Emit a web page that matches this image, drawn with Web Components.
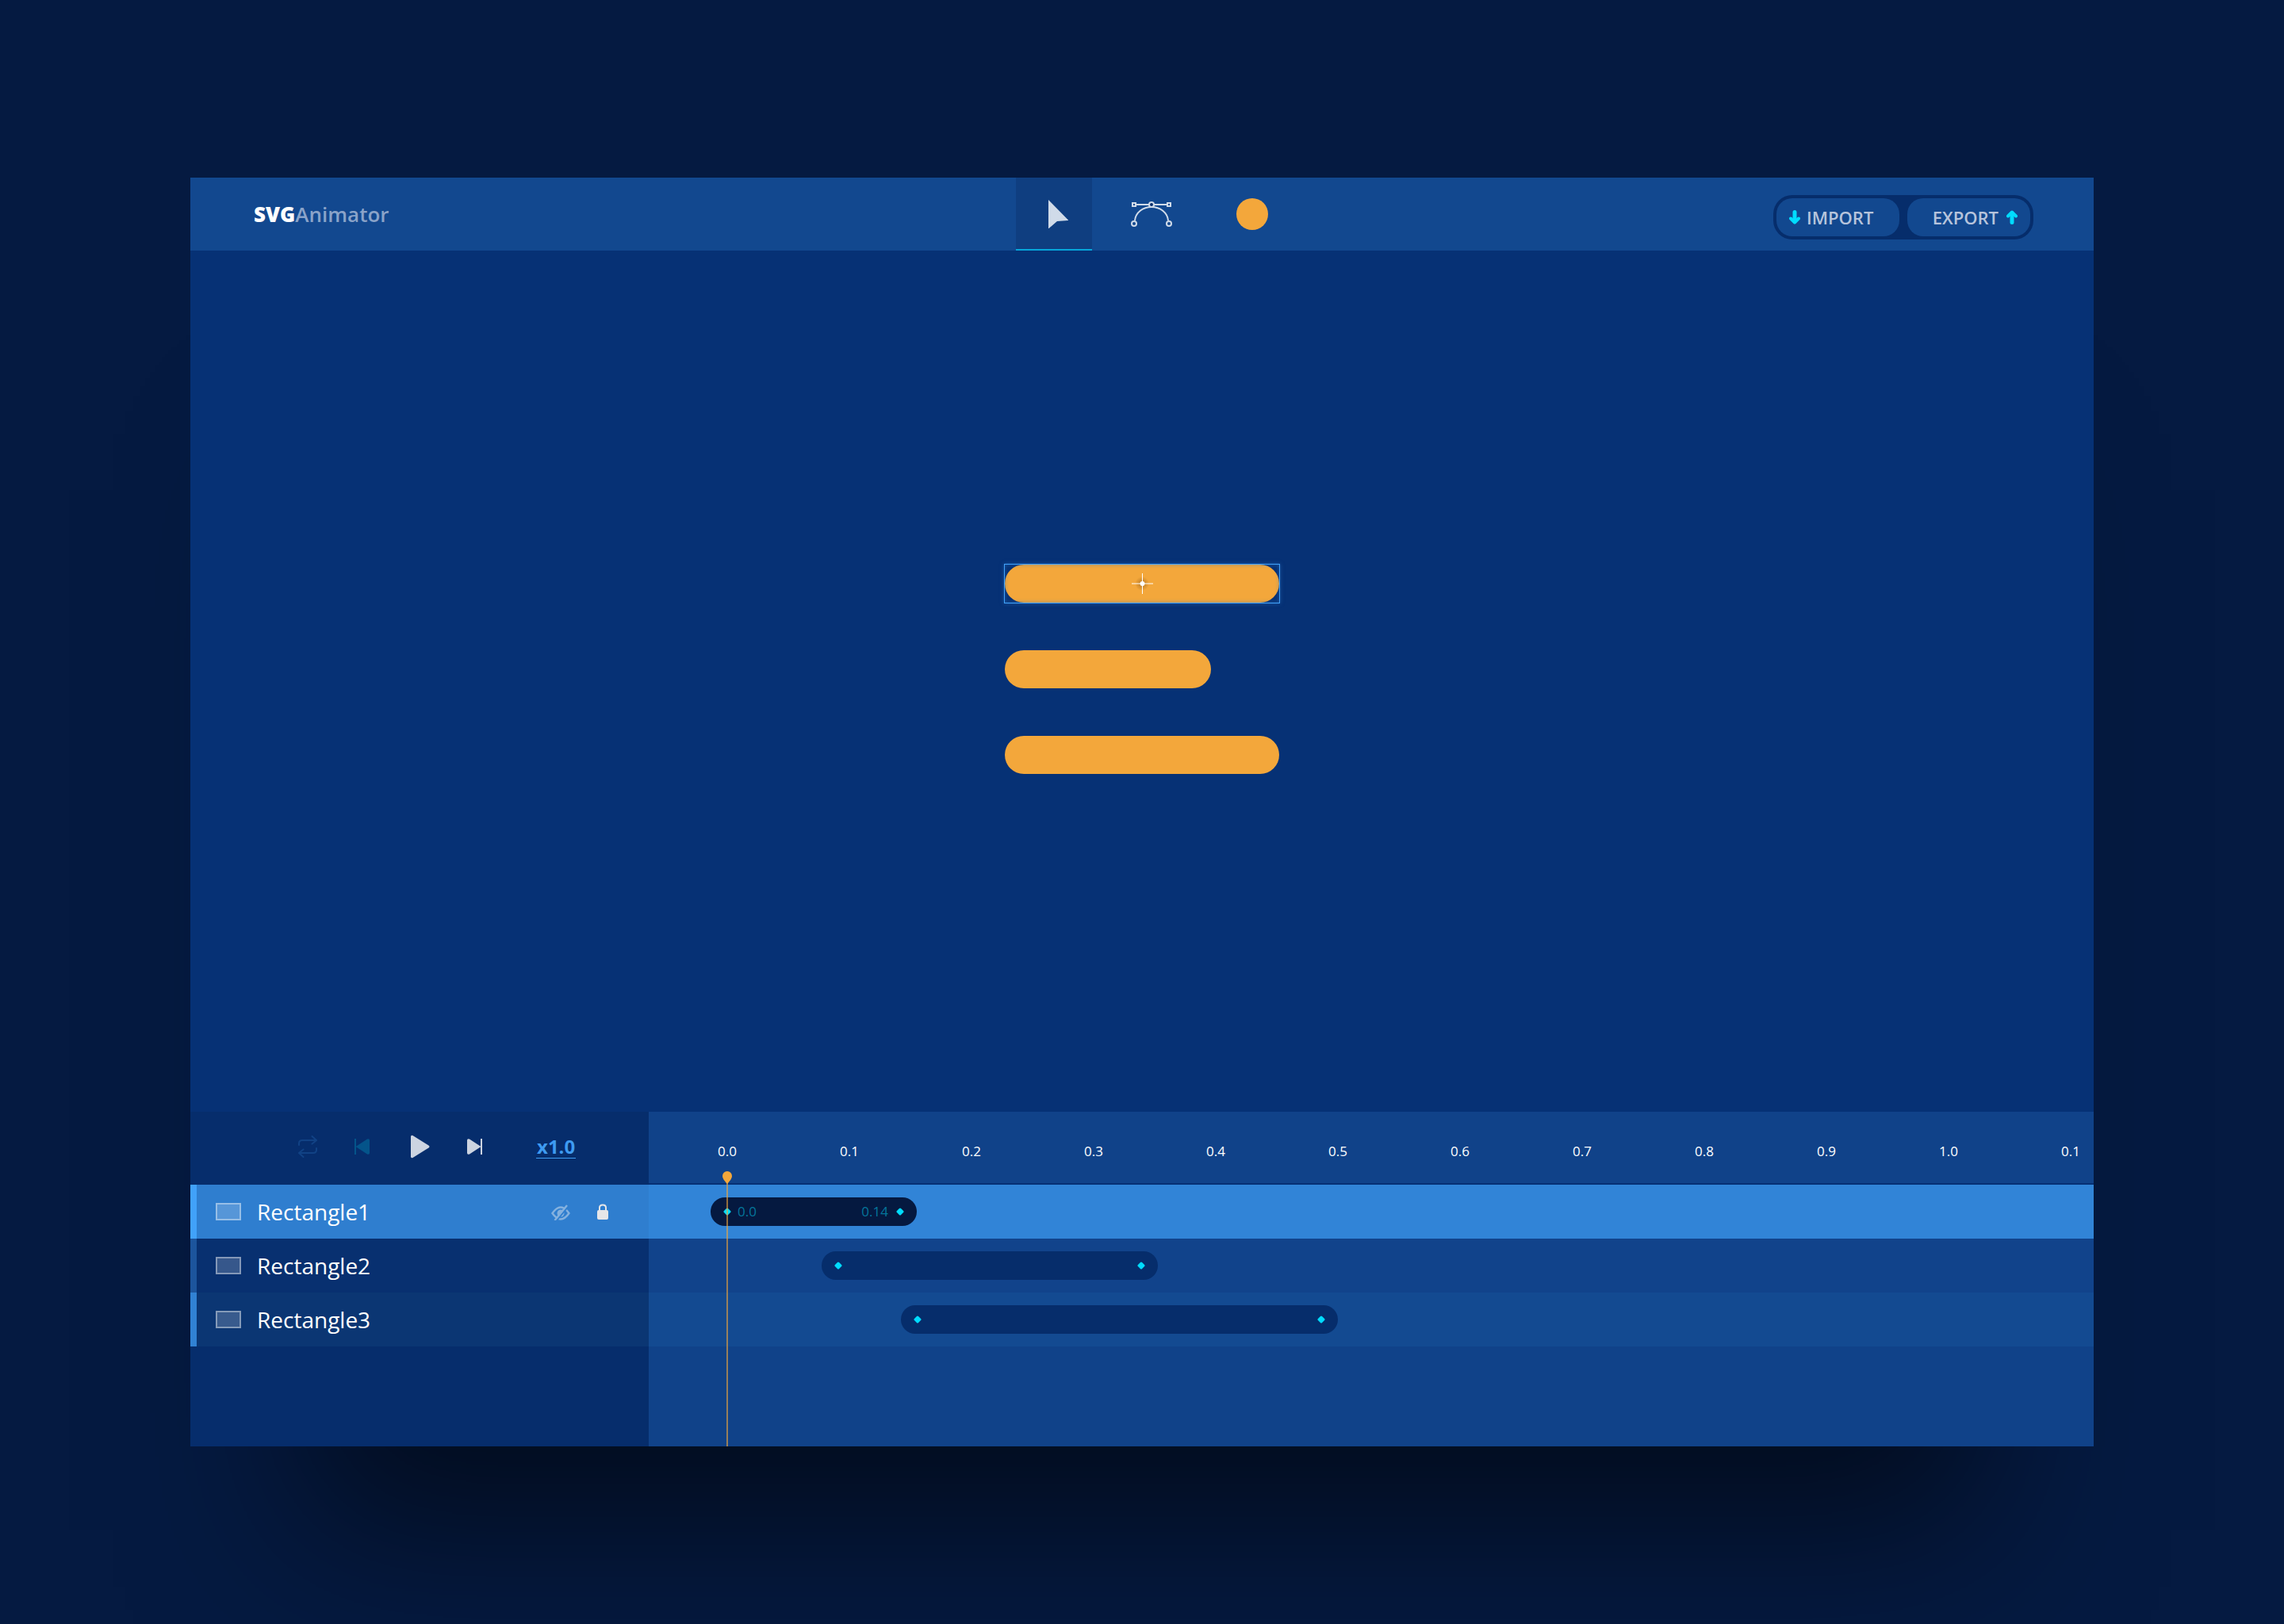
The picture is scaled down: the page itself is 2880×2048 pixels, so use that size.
<!DOCTYPE html>
<html lang="en">
<head>
<meta charset="utf-8">
<title>SVGAnimator</title>
<style>
  html, body { margin: 0; }
  body {
    background: #051a41;
    font-family: "Open Sans", "Noto Sans", sans-serif;
    color: #fff;
  }
</style>
</head>
<body>
<animator-app></animator-app>

<script>
const base = `
  *, *::before, *::after { box-sizing: border-box; }
  button { margin: 0; padding: 0; border: 0; background: none; color: inherit; font: inherit; cursor: pointer; }
  svg { display: block; }
`;

function define(name, render) {
  customElements.define(name, class extends HTMLElement {
    connectedCallback() {
      if (this.shadowRoot) return;
      const root = this.attachShadow({ mode: "open" });
      const template = document.createElement("template");
      template.innerHTML = render(this);
      root.append(template.content.cloneNode(true));
    }
  });
}

/* Icons */
const icons = {
  cursor: `<svg width="36" height="38" viewBox="0 0 36 38"><path d="M11 2L36.500 28L22 29L11 38.500Z" fill="#d0dbe9"/></svg>`,
  pen: `<svg width="52" height="32" viewBox="0 0 52 32" fill="none" stroke="#d0dbe9" stroke-width="2">
      <path d="M7 4H23M29 4H45"/><path d="M5 24C6 14 15 7 26 7S46 14 47 24"/>
      <rect x="2" y="2" width="4" height="4"/><rect x="46" y="2" width="4" height="4"/>
      <circle cx="26" cy="4" r="3" fill="#062d6b"/>
      <circle cx="4" cy="28" r="3" fill="#12488f"/><circle cx="48" cy="28" r="3" fill="#12488f"/></svg>`,
  disc: `<svg width="40" height="40" viewBox="0 0 40 40"><circle cx="20" cy="20" r="20" fill="#f3a73b"/></svg>`,
  down: `<svg width="14" height="18" viewBox="0 0 14 18" fill="none" stroke="#00dcff" stroke-linecap="round" stroke-linejoin="round"><path d="M7 2.500V14" stroke-width="5"/><path d="M2 10.500L7 15.500L12 10.500" stroke-width="4"/></svg>`,
  up: `<svg width="14" height="18" viewBox="0 0 14 18" fill="none" stroke="#00dcff" stroke-linecap="round" stroke-linejoin="round"><path d="M7 15.500V4" stroke-width="5"/><path d="M2 7.500L7 2.500L12 7.500" stroke-width="4"/></svg>`,
  loop: `<svg width="24" height="28" viewBox="0 0 24 28" fill="none" stroke="#114285" stroke-width="2" stroke-linecap="round" stroke-linejoin="round">
      <path d="M1 12V10Q1 6 5 6H22M17.500 1L23 6L17.500 10.500"/><path d="M23 16V18Q23 22 19 22H2M6.500 17.500L1 22L6.500 27"/></svg>`,
  prev: `<svg width="24" height="20" viewBox="0 0 24 20" fill="#04548a"><rect x="0" y="0" width="2" height="20"/><path d="M1.500 10L16 .500Q19 -.500 19 2V18Q19 20.500 16 19.500Z"/></svg>`,
  play: `<svg width="24" height="30" viewBox="0 0 24 30" fill="#ccd4e1"><path d="M0 2.500Q0 0 2.500 1L22.500 13.500Q24.500 15 22.500 16.500L2.500 29Q0 30 0 27.500Z"/></svg>`,
  next: `<svg width="24" height="20" viewBox="0 0 24 20" fill="#ccd4e1"><rect x="17" y="0" width="2" height="20"/><path d="M17.500 10L3 .500Q0 -.500 0 2V18Q0 20.500 3 19.500Z"/></svg>`,
  hidden: `<svg width="24" height="22" viewBox="0 0 24 22" fill="none" stroke="#84b1df" stroke-width="2.400"><path d="M1.500 13Q12 -2 22.500 13Q12 28 1.500 13Z"/><circle cx="12" cy="13" r="4.500" fill="#84b1df" stroke="none"/><path d="M7.500 21.500L21.500 4.500" stroke="#2f7ecf" stroke-width="2"/><path d="M4.500 22L20 3" stroke-width="2.400"/></svg>`,
  lock: `<svg width="16" height="20" viewBox="0 0 16 20"><path d="M4 9V5Q4 1.500 8 1.500T12 5V9" fill="none" stroke="#e6e6e8" stroke-width="2"/><rect x="1" y="8" width="14" height="12" rx="2" fill="#e6e6e8"/></svg>`,
  keyframe: `<svg width="10" height="10" viewBox="0 0 10 10"><path d="M5 2L8 5L5 8L2 5Z" fill="#00dcff" stroke="#00dcff" stroke-width="3" stroke-linejoin="round"/></svg>`
};

/* Header */
define("tool-button", el => `
  <style>${base}
    :host { display: flex; }
    button { display: flex; align-items: center; justify-content: center; width: 150px; }
    :host([active]) button { width: 96px; background: #0f3e80; border-bottom: 2px solid #06a5d9; }
    :host([icon="disc"]) button { width: 72px; justify-content: flex-end; }
  </style>
  <button aria-label="${el.getAttribute("label")}">${icons[el.getAttribute("icon")]}</button>`);

define("file-button", el => `
  <style>${base}
    :host { display: flex; }
    button { display: flex; align-items: center; gap: 8px; width: 155px; height: 48px; padding: 0 16px;
      border-radius: 20px; background: #12488f; color: #b6c4dc; font-size: 22px; line-height: 30px; font-weight: 600; }
    :host([icon="up"]) button { flex-direction: row-reverse; gap: 10px; }
  </style>
  <button>${icons[el.getAttribute("icon")]}<slot></slot></button>`);

define("app-header", () => `
  <style>${base}
    :host { display: grid; grid-template-columns: 1fr auto 1fr; height: 92px; background: #12488f; }
    .brand { align-self: center; padding-left: 80px; font-size: 26px; line-height: 36px; font-weight: 600; color: #8aa3c9; }
    b { font-weight: 800; color: #fff; }
    nav { display: flex; }
    .files { display: flex; gap: 10px; align-self: end; justify-self: end; margin: 0 76px 14px 0; padding: 4px;
      border-radius: 24px; background: #062d6b; }
  </style>
  <div class="brand"><b>SVG</b>Animator</div>
  <nav>
    <tool-button icon="cursor" label="Select" active></tool-button>
    <tool-button icon="pen" label="Path"></tool-button>
    <tool-button icon="disc" label="Fill colour"></tool-button>
  </nav>
  <div class="files">
    <file-button icon="down">IMPORT</file-button>
    <file-button icon="up">EXPORT</file-button>
  </div>`);

/* Stage */
define("stage-shape", el => `
  <style>${base}
    :host { display: block; position: relative; height: 48px; width: 346px; border-radius: 24px; background: #f3a73b; }
    :host([short]) { width: 260px; }
    .selection { display: none; position: absolute; inset: -1px; border: 1px solid #41a2fa;
      box-shadow: 0 0 5px #2f7ecf80, inset 0 0 5px #2f7ecf80; align-items: center; justify-content: center; }
    :host([selected]) .selection { display: flex; }
  </style>
  <div class="selection">
    <svg width="40" height="40" viewBox="0 0 40 40">
      <defs><radialGradient id="g"><stop offset="0" stop-color="#8a5410" stop-opacity=".6"/><stop offset="1" stop-color="#8a5410" stop-opacity="0"/></radialGradient></defs>
      <circle cx="20" cy="20" r="9" fill="url(#g)"/>
      <path d="M7 20H34" stroke="#fff" stroke-opacity=".5" stroke-width="2"/>
      <path d="M20.500 7V33" stroke="#fff"/>
      <circle cx="20.500" cy="20" r="3" fill="#fff"/>
    </svg>
  </div>`);

define("app-stage", () => `
  <style>${base}
    :host { display: flex; flex: 1; align-items: center; justify-content: center; padding-bottom: 30px; background: #063175; }
    .art { display: flex; flex-direction: column; gap: 60px; }
  </style>
  <div class="art">
    <stage-shape selected></stage-shape>
    <stage-shape short></stage-shape>
    <stage-shape></stage-shape>
  </div>`);

/* Timeline */
define("play-controls", () => `
  <style>${base}
    :host { display: flex; align-items: center; gap: 47px; height: 92px; padding: 0 0 4px 136px; }
    .speed { margin-left: 16px; padding: 1px 1px 0; border-bottom: 1px solid #3e9bf1; color: #3e9bf1;
      font-size: 24px; line-height: 28px; font-weight: 700; }
  </style>
  <button aria-label="Loop">${icons.loop}</button>
  <button aria-label="Previous keyframe">${icons.prev}</button>
  <button aria-label="Play">${icons.play}</button>
  <button aria-label="Next keyframe">${icons.next}</button>
  <button class="speed" title="Speed">x1.0</button>`);

define("layer-row", el => `
  <style>${base}
    :host { display: flex; align-items: center; height: 68px; padding: 0 50px 0 24px;
      border-left: 8px solid #1c559d; background: #083070; font-size: 28px; line-height: 38px; }
    :host([tone="light"]) { border-color: #3182d3; background: #0b3673; }
    :host([selected]) { border-color: #41a2fa; background: #2f7ecf; }
    .swatch { width: 32px; height: 22px; margin-right: 20px; border: 2px solid #ffffff80; background: #ffffff30; background-clip: padding-box; }
    .name { flex: 1; }
    .actions { display: none; gap: 33px; }
    :host([selected]) .actions { display: flex; align-items: center; }
  </style>
  <span class="swatch"></span>
  <span class="name"><slot></slot></span>
  <span class="actions">
    <button aria-label="Toggle visibility">${icons.hidden}</button>
    <button aria-label="Toggle lock">${icons.lock}</button>
  </span>`);

define("track-row", el => `
  <style>${base}
    :host { display: flex; align-items: center; height: 68px; background: #11438b; }
    :host([tone="light"]) { background: #134a91; }
    :host([selected]) { background: #3184d7; }
    .clip { display: flex; align-items: center; justify-content: space-between; height: 36px; padding: 0 16px; border-radius: 18px;
      margin-left: ${el.getAttribute("start")}px; width: ${el.getAttribute("length")}px; background: #062d6b; }
    :host([selected]) .clip { background: #051940; }
    .end { display: flex; align-items: center; gap: 8px; color: #04759b; font-size: 17px; line-height: 24px; }
    .end:last-child { gap: 10px; }
  </style>
  <div class="clip">
    <span class="end">${icons.keyframe}<slot name="from"></slot></span>
    <span class="end"><slot name="to"></slot>${icons.keyframe}</span>
  </div>`);

define("time-ruler", () => `
  <style>${base}
    :host { display: flex; align-items: center; height: 92px; padding: 10px 0 0 22px; overflow: hidden;
      border-bottom: 2px solid #063074; color: #fff; font-size: 17px; line-height: 24px; }
    span { flex: none; width: 154px; text-align: center; }
  </style>
  ${["0.0","0.1","0.2","0.3","0.4","0.5","0.6","0.7","0.8","0.9","1.0","0.1"].map(t => `<span>${t}</span>`).join("")}`);

define("play-head", () => `
  <style>${base}
    :host { position: absolute; top: 75px; bottom: 0; left: 93px; display: flex; flex-direction: column; align-items: center; }
    i { flex: 1; width: 2px; background: #f3a73b; opacity: .6; }
  </style>
  <svg width="12" height="16" viewBox="0 0 12 16"><path d="M6.500 16H5.500C4 13 0 10 0 6A6 6 0 0 1 12 6C12 10 8 13 6.500 16Z" fill="#f3a73b"/></svg>
  <i></i>`);

define("app-timeline", () => `
  <style>${base}
    :host { display: flex; height: 422px; }
    .layers { width: 578px; background: #062d6c; }
    .tracks { flex: 1; min-width: 0; position: relative; background: #104289; }
  </style>
  <div class="layers">
    <play-controls></play-controls>
    <layer-row selected>Rectangle1</layer-row>
    <layer-row>Rectangle2</layer-row>
    <layer-row tone="light">Rectangle3</layer-row>
  </div>
  <div class="tracks">
    <time-ruler></time-ruler>
    <track-row selected start="78" length="260"><span slot="from">0.0</span><span slot="to">0.14</span></track-row>
    <track-row start="218" length="424"></track-row>
    <track-row tone="light" start="318" length="551"></track-row>
    <play-head></play-head>
  </div>`);

define("animator-app", () => `
  <style>${base}
    :host { display: flex; min-height: 100vh; box-sizing: border-box; padding: 224px 240px; overflow: hidden; }
    main { display: flex; flex: 1; flex-direction: column; min-width: 0; box-shadow: 0 250px 200px -145px rgba(0, 0, 0, .55); }
  </style>
  <main>
    <app-header></app-header>
    <app-stage></app-stage>
    <app-timeline></app-timeline>
  </main>`);
</script>
</body>
</html>
